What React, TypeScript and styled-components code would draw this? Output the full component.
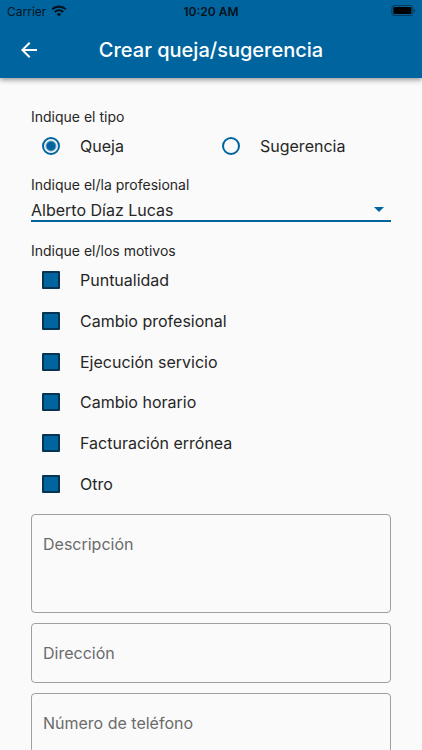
import React, { useState } from "react";
import styled, { createGlobalStyle } from "styled-components";

const BLUE = "#00659f";
const INK = "#262626";

const GlobalStyle = createGlobalStyle`
  *, *::before, *::after { box-sizing: border-box; }
  body {
    margin: 0;
    background: #fafafa;
    color: ${INK};
    font-family: Inter, "Liberation Sans", sans-serif;
    font-size: 16px;
  }
`;

const Screen = styled.div`
  display: flex;
  flex-direction: column;
  height: 100vh;
`;

const Header = styled.header`
  position: relative;
  flex: none;
  background: ${BLUE};
  box-shadow: 0 2px 5px rgba(0, 0, 0, 0.4);
`;

const StatusBar = styled.div`
  display: grid;
  grid-template-columns: 1fr auto 1fr;
  align-items: center;
  height: 22px;
  padding: 0 7px;
  color: #06121c;
  font-size: 12px;
`;

const Carrier = styled.span`
  display: flex;
  align-items: center;
  gap: 5px;
`;

const Clock = styled.time`
  font-size: 12px;
  font-weight: 600;
`;

const Battery = styled.svg`
  justify-self: end;
`;

const Toolbar = styled.div`
  display: grid;
  grid-template-columns: 40px 1fr 40px;
  align-items: center;
  height: 56px;
  padding: 0 9px;
`;

const BackButton = styled.button`
  display: flex;
  align-items: center;
  justify-content: center;
  height: 40px;
  padding: 0;
  border: 0;
  background: none;
  color: #fff;
`;

const Title = styled.h1`
  margin: 0;
  color: #fff;
  font-size: 20px;
  font-weight: 500;
  line-height: 24px;
  text-align: center;
`;

const Form = styled.form`
  flex: 1;
  min-height: 0;
  overflow-y: auto;
  scrollbar-width: none;
  padding: 30px 31px;
`;

const Group = styled.fieldset`
  min-width: 0;
  margin: 0 0 10px;
  padding: 0;
  border: 0;
`;

const Legend = styled.legend`
  display: block;
  padding: 0;
  font-size: 14px;
  line-height: 18px;
`;

const SelectLabel = styled.label`
  display: block;
  font-size: 14px;
  line-height: 18px;
`;

const RadioRow = styled.div`
  display: grid;
  grid-template-columns: 1fr 1fr;
  grid-auto-rows: 40px;
`;

const ReasonList = styled.div`
  display: grid;
  grid-auto-rows: 1fr;
  min-height: 244px;
`;

const Option = styled.label`
  display: flex;
  align-items: center;
  gap: 20px;
  padding-left: 11px;
`;

const Radio = styled.input.attrs({ type: "radio" })`
  appearance: none;
  flex: none;
  width: 18px;
  height: 18px;
  margin: 0;
  border: 2px solid ${BLUE};
  border-radius: 50%;

  &:checked {
    background: radial-gradient(circle, ${BLUE} 4px, transparent 6px);
  }
`;

const Checkbox = styled.input.attrs({ type: "checkbox" })`
  appearance: none;
  flex: none;
  width: 18px;
  height: 18px;
  margin: 0;
  border: 2px solid #043451;
  border-radius: 1px;
  background: ${BLUE};

  &:checked {
    background: radial-gradient(circle, #fff 3px, ${BLUE} 4px);
  }
`;

const SelectField = styled.div`
  display: grid;
  align-items: center;
  margin: 0 0 20px;
  padding-top: 5px;
  border-bottom: 2px solid ${BLUE};

  & > * {
    grid-area: 1 / 1;
  }
`;

const Select = styled.select`
  appearance: none;
  width: 100%;
  height: 21px;
  padding: 0 24px 0 0;
  border: 0;
  outline: 0;
  background: none;
  color: inherit;
  font: inherit;
  line-height: 20px;
`;

const Caret = styled.svg`
  justify-self: end;
  margin-right: 7px;
  pointer-events: none;
`;

const Fields = styled.div`
  display: grid;
  gap: 10px;
`;

const fieldLook = `
  display: block;
  width: 100%;
  border: 1px solid #a0a0a0;
  border-radius: 4px;
  background: none;
  color: ${INK};
  font-family: inherit;
  font-size: 16px;
  line-height: 20px;

  &::placeholder { color: #6b6b6b; opacity: 1; }
`;

const TextArea = styled.textarea`
  ${fieldLook}
  height: 99px;
  padding: 19px 11px;
  resize: none;
`;

const TextInput = styled.input`
  ${fieldLook}
  height: 60px;
  padding: 0 11px;
`;

const reasons = [
  "Puntualidad",
  "Cambio profesional",
  "Ejecución servicio",
  "Cambio horario",
  "Facturación errónea",
  "Otro",
];

export default function App() {
  const [kind, setKind] = useState("Queja");

  return (
    <Screen>
      <GlobalStyle />
      <Header>
        <StatusBar>
          <Carrier>
            Carrier
            <svg width="16" height="12" viewBox="0 0 16 12" fill="none" stroke="currentColor" aria-hidden="true">
              <path d="M1.2 4.3a9.8 9.8 0 0 1 13.6 0" strokeWidth="2.2" />
              <path d="M3.8 7a6 6 0 0 1 8.4 0" strokeWidth="2.1" />
              <path d="M8 11.4 5.7 9.1a3.3 3.3 0 0 1 4.6 0Z" fill="currentColor" stroke="none" />
            </svg>
          </Carrier>
          <Clock>10:20 AM</Clock>
          <Battery width="24" height="12" viewBox="0 0 24 12" aria-hidden="true">
            <rect x="0.9" y="0.5" width="21" height="10" rx="2.5" fill="none" stroke="#06121c" strokeOpacity="0.5" />
            <rect x="2.4" y="2" width="18" height="7" rx="1.2" fill="#000" />
            <path d="M22.9 4v3.6a2 2 0 0 0 0-3.6Z" fill="#06121c" fillOpacity="0.6" />
          </Battery>
        </StatusBar>
        <Toolbar>
          <BackButton type="button" aria-label="Volver">
            <svg width="24" height="24" viewBox="0 0 24 24" fill="currentColor" aria-hidden="true">
              <path d="M20 11H7.83l5.59-5.59L12 4l-8 8 8 8 1.41-1.41L7.83 13H20v-2z" />
            </svg>
          </BackButton>
          <Title>Crear queja/sugerencia</Title>
        </Toolbar>
      </Header>

      <Form>
        <Group>
          <Legend>Indique el tipo</Legend>
          <RadioRow>
            {["Queja", "Sugerencia"].map((name) => (
              <Option key={name}>
                <Radio name="kind" checked={kind === name} onChange={() => setKind(name)} />
                {name}
              </Option>
            ))}
          </RadioRow>
        </Group>

        <SelectLabel htmlFor="professional">Indique el/la profesional</SelectLabel>
        <SelectField>
          <Select id="professional">
            <option>Alberto Díaz Lucas</option>
          </Select>
          <Caret width="10" height="5" viewBox="0 0 10 5" fill={BLUE} aria-hidden="true">
            <path d="M0 0h10L5 5z" />
          </Caret>
        </SelectField>

        <Group>
          <Legend>Indique el/los motivos</Legend>
          <ReasonList>
            {reasons.map((reason) => (
              <Option key={reason}>
                <Checkbox />
                {reason}
              </Option>
            ))}
          </ReasonList>
        </Group>

        <Fields>
          <TextArea aria-label="Descripción" placeholder="Descripción" />
          <TextInput aria-label="Dirección" placeholder="Dirección" />
          <TextInput type="tel" aria-label="Número de teléfono" placeholder="Número de teléfono" />
        </Fields>
      </Form>
    </Screen>
  );
}
